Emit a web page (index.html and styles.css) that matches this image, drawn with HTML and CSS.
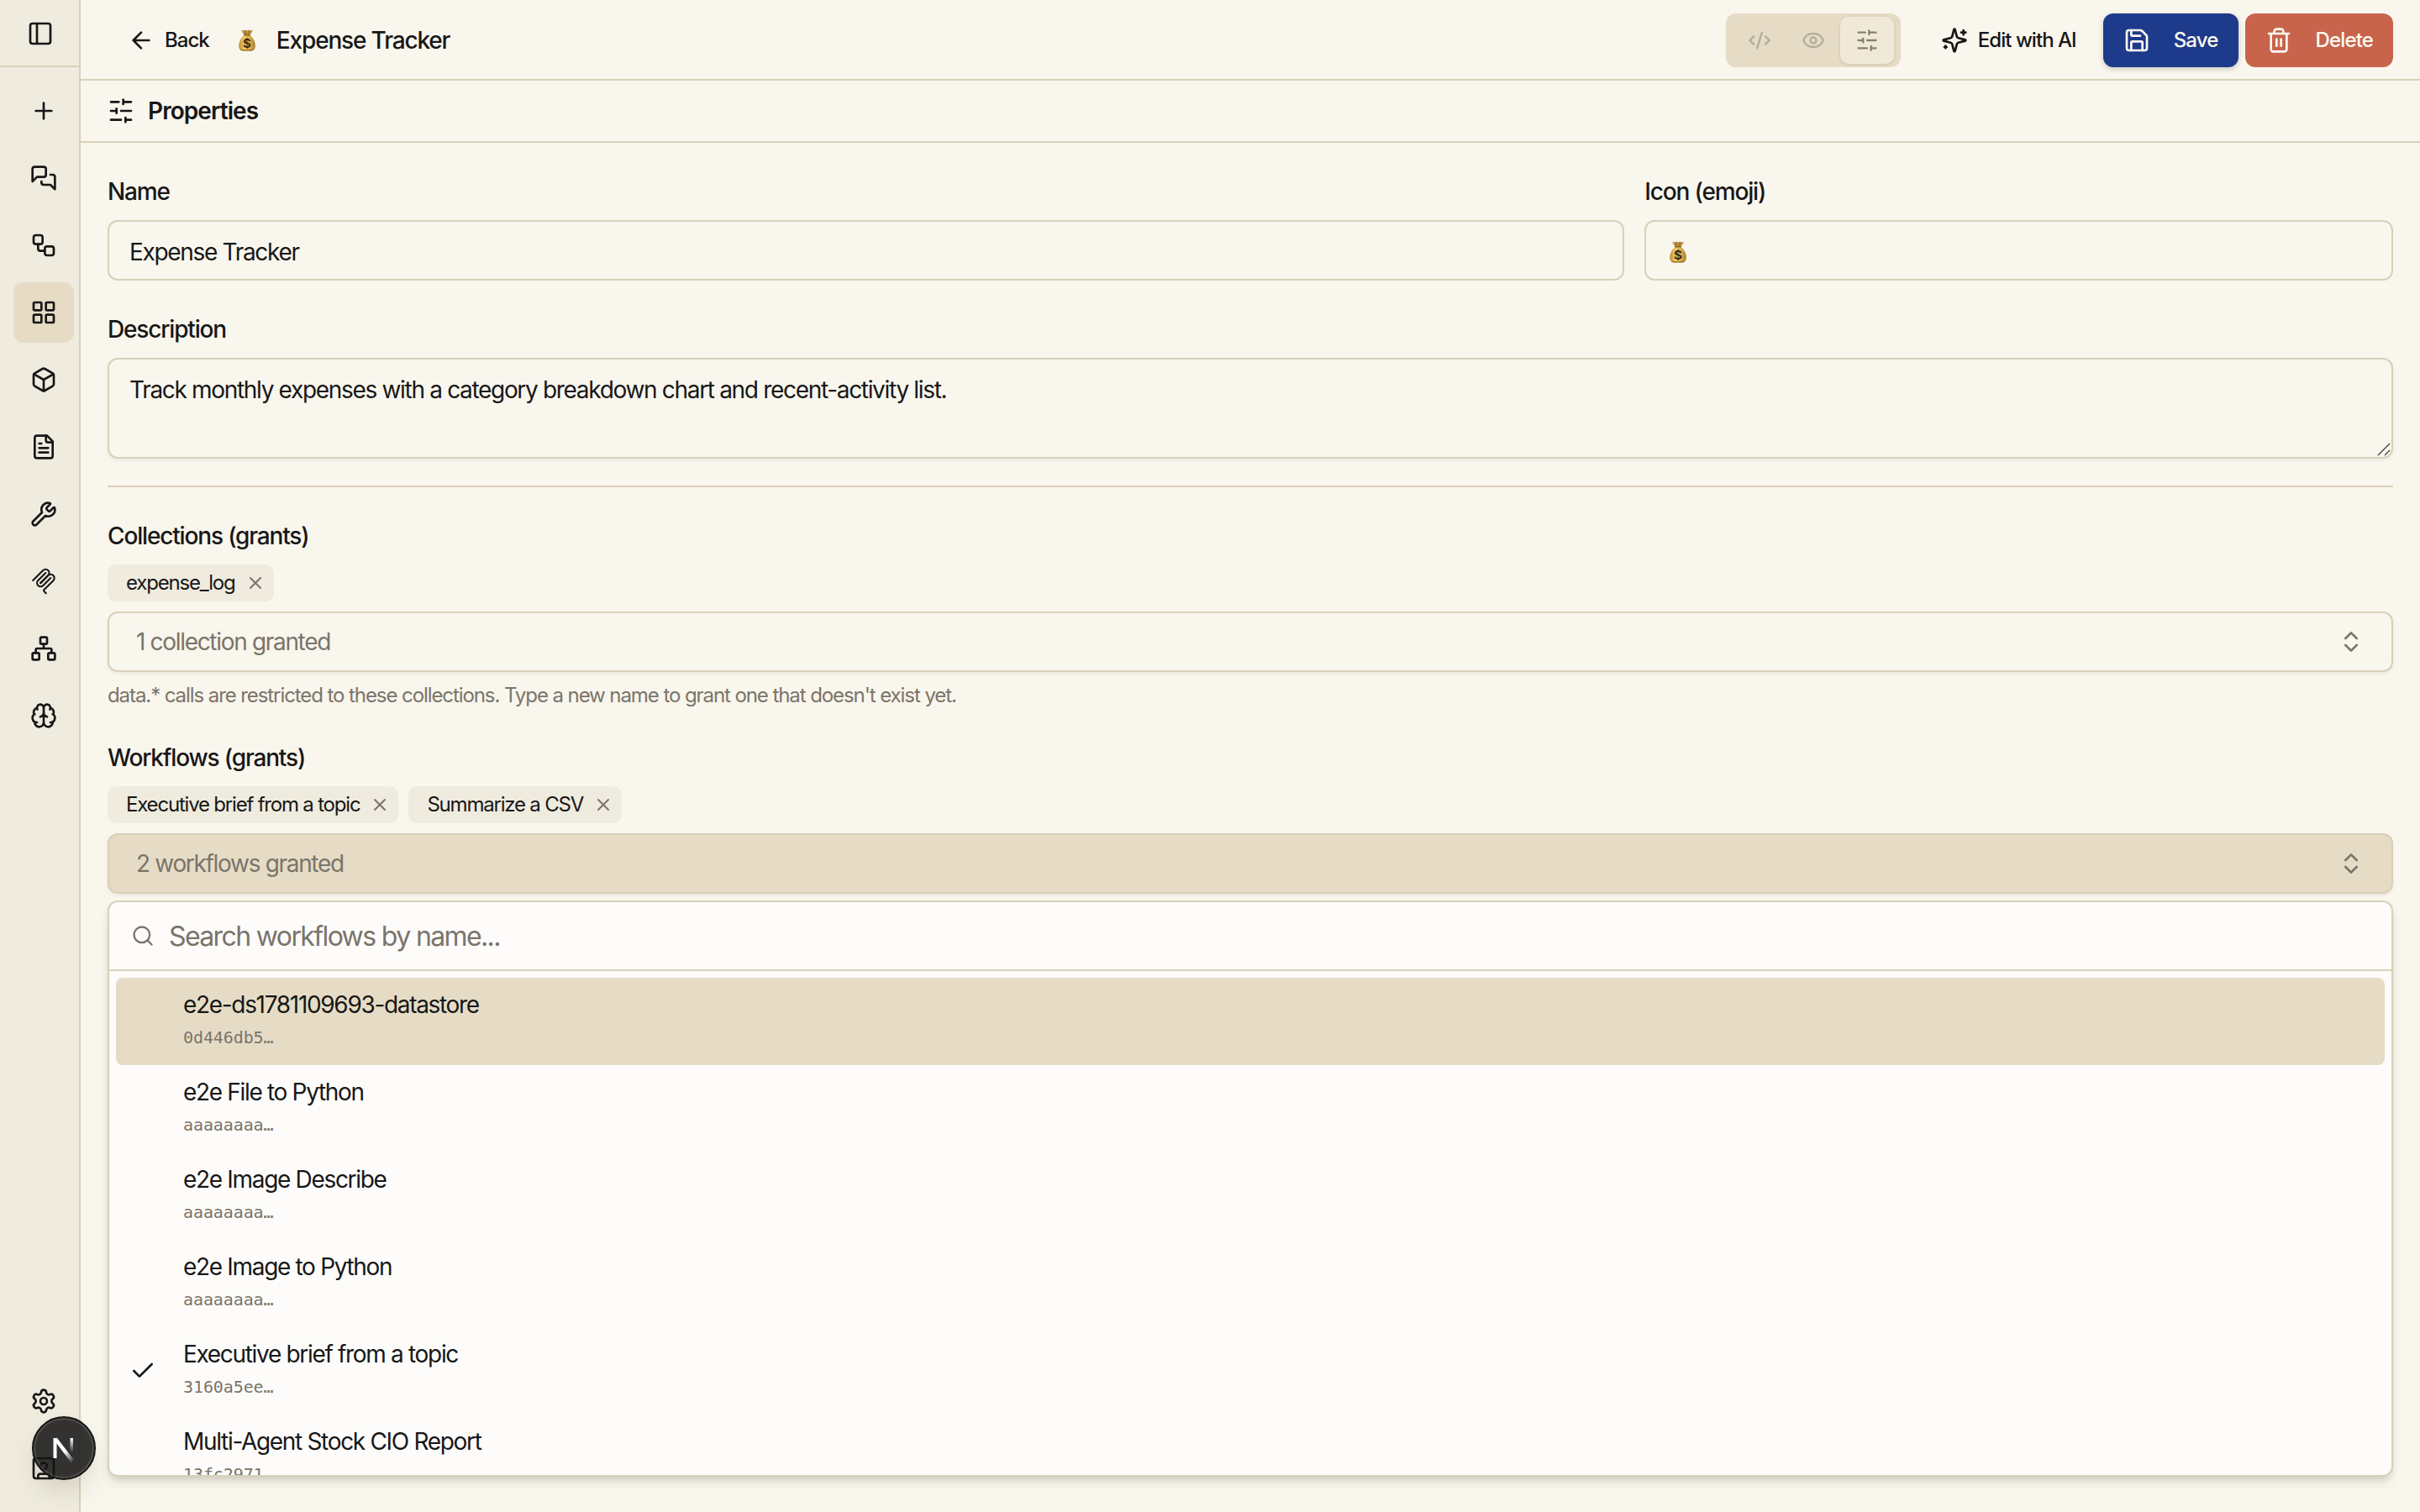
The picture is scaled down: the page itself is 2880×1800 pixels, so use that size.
FILE: index.html
```html
<!DOCTYPE html>
<html lang="en">
<head>
<meta charset="utf-8">
<title>Expense Tracker</title>
<link rel="stylesheet" href="styles.css">
</head>
<body>
<svg class="defs" width="0" height="0">
  <linearGradient id="gold" x1="0" x2="1"><stop stop-color="#c08f35"/><stop offset=".35" stop-color="#efcd6a"/><stop offset=".7" stop-color="#d9ae48"/><stop offset="1" stop-color="#a87a2c"/></linearGradient>
  <symbol id="sliders" viewBox="0 0 24 24"><path d="M21 4h-7M10 4H3M21 12h-9M8 12H3M21 20h-5M12 20H3M14 2v4M8 10v4M16 18v4"/></symbol>
  <symbol id="x" viewBox="0 0 24 24"><path d="M18 6 6 18M6 6l12 12"/></symbol>
  <symbol id="updown" viewBox="0 0 24 24"><path d="m7 15 5 5 5-5M7 9l5-5 5 5"/></symbol>
  <symbol id="moneybag" viewBox="0 0 20 26">
    <path d="M3 .8 6 1.500 7.500.5 10 1.500 12.500.5 14 1.500 17 .8 13.500 7h-7z" fill="#b98c3c"/>
    <path d="M7.500 2 8.500 6M12.500 2l-1 4" stroke="#8a6222" stroke-width=".8"/>
    <path d="M6.500 7h7c3.800 3 6.300 8 6.300 12.500 0 4-1.800 6-5.800 6H6c-4 0-5.800-2-5.800-6C.2 15 2.700 10 6.500 7z" fill="url(#gold)"/>
    <path d="M6 6.200h8v1.400H6z" fill="#8f6724"/>
    <path d="M1.500 23c2 1.600 15 1.600 17 0-1 1.900-2.500 2.500-4.500 2.500H6c-2 0-3.500-.6-4.500-2.500z" fill="#9a6f28"/>
  </symbol>
</svg>
<div class="app">
  <nav class="sidebar">
    <div class="side-head"><svg class="ic" viewBox="0 0 24 24"><rect width="18" height="18" x="3" y="3" rx="2"/><path d="M9 3v18"/></svg></div>
    <div class="side-list">
      <a class="side-item"><svg class="ic" viewBox="0 0 24 24"><path d="M5 12h14M12 5v14"/></svg></a>
      <a class="side-item"><svg class="ic" viewBox="0 0 24 24"><path d="M14 9a2 2 0 0 1-2 2H6l-4 4V4a2 2 0 0 1 2-2h8a2 2 0 0 1 2 2z"/><path d="M18 9h2a2 2 0 0 1 2 2v11l-4-4h-6a2 2 0 0 1-2-2v-1"/></svg></a>
      <a class="side-item"><svg class="ic" viewBox="0 0 24 24"><rect width="8" height="8" x="3" y="3" rx="2"/><path d="M7 11v4a2 2 0 0 0 2 2h4"/><rect width="8" height="8" x="13" y="13" rx="2"/></svg></a>
      <a class="side-item active"><svg class="ic" viewBox="0 0 24 24"><rect width="7" height="7" x="3" y="3" rx="1"/><rect width="7" height="7" x="14" y="3" rx="1"/><rect width="7" height="7" x="14" y="14" rx="1"/><rect width="7" height="7" x="3" y="14" rx="1"/></svg></a>
      <a class="side-item"><svg class="ic" viewBox="0 0 24 24"><path d="M21 8a2 2 0 0 0-1-1.730l-7-4a2 2 0 0 0-2 0l-7 4A2 2 0 0 0 3 8v8a2 2 0 0 0 1 1.730l7 4a2 2 0 0 0 2 0l7-4A2 2 0 0 0 21 16Z"/><path d="m3.300 7 8.700 5 8.700-5M12 22V12"/></svg></a>
      <a class="side-item"><svg class="ic" viewBox="0 0 24 24"><path d="M15 2H6a2 2 0 0 0-2 2v16a2 2 0 0 0 2 2h12a2 2 0 0 0 2-2V7Z"/><path d="M14 2v4a2 2 0 0 0 2 2h4M10 9H8M16 13H8M16 17H8"/></svg></a>
      <a class="side-item"><svg class="ic" viewBox="0 0 24 24"><path d="M14.700 6.300a1 1 0 0 0 0 1.400l1.600 1.600a1 1 0 0 0 1.400 0l3.106-3.105c.32-.322.863-.22.983.218a6 6 0 0 1-8.259 7.057l-7.910 7.910a1 1 0 0 1-2.999-3l7.910-7.910a6 6 0 0 1 7.057-8.259c.438.12.54.662.219.984z"/></svg></a>
      <a class="side-item"><svg class="ic mcp" viewBox="0 0 180 180"><path d="M18 84.853 85.882 16.971c9.373-9.373 24.569-9.373 33.941 0 9.373 9.372 9.373 24.568 0 33.941L68.558 102.177"/><path d="M69.265 101.470 119.823 50.912c9.373-9.373 24.569-9.373 33.942 0l.353.353c9.373 9.373 9.373 24.569 0 33.941L92.725 146.600c-3.124 3.124-3.124 8.189 0 11.313l12.606 12.607"/><path d="M102.853 33.941 52.648 84.146c-9.372 9.372-9.372 24.568 0 33.941 9.373 9.372 24.569 9.372 33.941 0L136.794 67.882"/></svg></a>
      <a class="side-item"><svg class="ic" viewBox="0 0 24 24"><rect x="16" y="16" width="6" height="6" rx="1"/><rect x="2" y="16" width="6" height="6" rx="1"/><rect x="9" y="2" width="6" height="6" rx="1"/><path d="M5 16v-3a1 1 0 0 1 1-1h12a1 1 0 0 1 1 1v3M12 12V8"/></svg></a>
      <a class="side-item"><svg class="ic" viewBox="0 0 24 24"><path d="M12 18V5M15 13a4.170 4.170 0 0 1-3-4 4.170 4.170 0 0 1-3 4M17.598 6.500A3 3 0 1 0 12 5a3 3 0 1 0-5.598 1.500M17.997 5.125a4 4 0 0 1 2.526 5.770M18 18a4 4 0 0 0 2-7.464M19.967 17.483A4 4 0 1 1 12 18a4 4 0 1 1-7.967-.517M6 18a4 4 0 0 1-2-7.464M6.003 5.125a4 4 0 0 0-2.526 5.770"/></svg></a>
    </div>
    <div class="side-foot">
      <a class="side-item"><svg class="ic" viewBox="0 0 24 24"><path d="M9.671 4.136a2.340 2.340 0 0 1 4.659 0 2.340 2.340 0 0 0 3.319 1.915 2.340 2.340 0 0 1 2.330 4.033 2.340 2.340 0 0 0 0 3.831 2.340 2.340 0 0 1-2.330 4.033 2.340 2.340 0 0 0-3.319 1.915 2.340 2.340 0 0 1-4.659 0 2.340 2.340 0 0 0-3.320-1.915 2.340 2.340 0 0 1-2.330-4.033 2.340 2.340 0 0 0 0-3.831A2.340 2.340 0 0 1 6.350 6.051a2.340 2.340 0 0 0 3.319-1.915"/><circle cx="12" cy="12" r="3"/></svg></a>
      <a class="side-item"><svg class="ic" viewBox="0 0 24 24"><rect width="18" height="18" x="3" y="3" rx="2"/><circle cx="12" cy="10" r="3"/><path d="M7 21v-2a2 2 0 0 1 2-2h6a2 2 0 0 1 2 2v2"/></svg></a>
    </div>
  </nav>
  <main class="main">
    <header class="topbar">
      <a class="back"><svg class="ic" viewBox="0 0 24 24"><path d="m12 19-7-7 7-7M19 12H5"/></svg><span>Back</span></a>
      <svg class="bag" viewBox="0 0 20 26"><use href="#moneybag"/><text x="10" y="22" text-anchor="middle" class="bag-sign">$</text></svg>
      <h1 class="title">Expense Tracker</h1>
      <div class="actions">
        <div class="views">
          <span class="view"><svg class="ic s28" viewBox="0 0 24 24"><path d="m18 16 4-4-4-4M6 8l-4 4 4 4M14.500 4l-5 16"/></svg></span>
          <span class="view"><svg class="ic s28" viewBox="0 0 24 24"><path d="M2.062 12.348a1 1 0 0 1 0-.696 10.750 10.750 0 0 1 19.876 0 1 1 0 0 1 0 .696 10.750 10.750 0 0 1-19.876 0"/><circle cx="12" cy="12" r="3"/></svg></span>
          <span class="view on"><svg class="ic s28"><use href="#sliders"/></svg></span>
        </div>
        <a class="edit"><svg class="ic" viewBox="0 0 24 24"><path d="M9.937 15.500A2 2 0 0 0 8.500 14.063l-6.135-1.582a.5.5 0 0 1 0-.962L8.500 9.936A2 2 0 0 0 9.937 8.500l1.582-6.135a.5.5 0 0 1 .963 0L14.063 8.500A2 2 0 0 0 15.500 9.937l6.135 1.581a.5.5 0 0 1 0 .964L15.500 14.063a2 2 0 0 0-1.437 1.437l-1.582 6.135a.5.5 0 0 1-.963 0zM20 3v4M22 5h-4M4 17v2M5 18H3"/></svg><span>Edit with AI</span></a>
        <a class="btn save"><svg class="ic" viewBox="0 0 24 24"><path d="M15.200 3a2 2 0 0 1 1.400.6l3.800 3.800a2 2 0 0 1 .6 1.400V19a2 2 0 0 1-2 2H5a2 2 0 0 1-2-2V5a2 2 0 0 1 2-2z"/><path d="M17 21v-7a1 1 0 0 0-1-1H8a1 1 0 0 0-1 1v7M7 3v4a1 1 0 0 0 1 1h7"/></svg><span>Save</span></a>
        <a class="btn delete"><svg class="ic" viewBox="0 0 24 24"><path d="M3 6h18M19 6v14c0 1-1 2-2 2H7c-1 0-2-1-2-2V6M8 6V4c0-1 1-2 2-2h4c1 0 2 1 2 2v2M10 11v6M14 11v6"/></svg><span>Delete</span></a>
      </div>
    </header>
    <div class="subbar"><svg class="ic"><use href="#sliders"/></svg><h2>Properties</h2></div>
    <form class="form">
      <div class="grid">
        <div class="field wide"><label>Name</label><div class="input line">Expense Tracker</div></div>
        <div class="field"><label>Icon (emoji)</label><div class="input line"><svg class="bag small" viewBox="0 0 20 26"><use href="#moneybag"/><text x="10" y="22" text-anchor="middle" class="bag-sign">$</text></svg></div></div>
      </div>
      <div class="field desc"><label>Description</label><div class="input area">Track monthly expenses with a category breakdown chart and recent-activity list.<svg class="grip" viewBox="0 0 16 16"><path d="M1 15 15 1M9 15l6-6"/></svg></div></div>
      <hr>
      <div class="grant">
        <label>Collections (grants)</label>
        <div class="chips"><span class="chip">expense_log<svg class="ic s24"><use href="#x"/></svg></span></div>
        <div class="select">1 collection granted<svg class="ic"><use href="#updown"/></svg></div>
        <p class="help">data.* calls are restricted to these collections. Type a new name to grant one that doesn't exist yet.</p>
      </div>
      <div class="grant second">
        <label>Workflows (grants)</label>
        <div class="chips"><span class="chip">Executive brief from a topic<svg class="ic s24"><use href="#x"/></svg></span><span class="chip">Summarize a CSV<svg class="ic s24"><use href="#x"/></svg></span></div>
        <div class="select open">2 workflows granted<svg class="ic"><use href="#updown"/></svg></div>
      </div>
      <div class="popup">
        <div class="search"><svg class="ic s28" viewBox="0 0 24 24"><path d="m21 21-4.340-4.340"/><circle cx="11" cy="11" r="8"/></svg><span>Search workflows by name...</span></div>
        <div class="options">
          <div class="option hl"><span class="mark"></span><div><b>e2e-ds1781109693-datastore</b><code>0d446db5…</code></div></div>
          <div class="option"><span class="mark"></span><div><b>e2e File to Python</b><code>aaaaaaaa…</code></div></div>
          <div class="option"><span class="mark"></span><div><b>e2e Image Describe</b><code>aaaaaaaa…</code></div></div>
          <div class="option"><span class="mark"></span><div><b>e2e Image to Python</b><code>aaaaaaaa…</code></div></div>
          <div class="option"><span class="mark"><svg class="ic" viewBox="0 0 24 24"><path d="M20 6 9 17l-5-5"/></svg></span><div><b>Executive brief from a topic</b><code>3160a5ee…</code></div></div>
          <div class="option"><span class="mark"></span><div><b>Multi-Agent Stock CIO Report</b><code>13fc2971…</code></div></div>
        </div>
      </div>
    </form>
  </main>
  <div class="dev-badge">
    <svg viewBox="0 0 40 40"><defs>
      <linearGradient id="ga" x1="21" y1="24" x2="31" y2="37" gradientUnits="userSpaceOnUse"><stop stop-color="#fff"/><stop offset="1" stop-color="#fff" stop-opacity="0"/></linearGradient>
      <linearGradient id="gb" x1="30" y1="8" x2="30" y2="25" gradientUnits="userSpaceOnUse"><stop stop-color="#fff"/><stop offset="1" stop-color="#fff" stop-opacity="0"/></linearGradient></defs>
      <path d="M7.500 32V8h4.500L32 34l-3.500 3L11.500 14.500V32z" fill="url(#ga)"/><path d="M27.500 8h3.500v16.500h-3.500z" fill="url(#gb)"/></svg>
  </div>
</div>
</body>
</html>
```
FILE: styles.css
```css
* { box-sizing: border-box; }
body {
  margin: 0;
  background: #f9f6ed;
  color: #171717;
  font: 400 28px/40px Inter, "Liberation Sans", sans-serif;
  letter-spacing: -1.32px;
}
h1, h2, p { margin: 0; }
.defs { position: absolute; }
.app { display: flex; height: 1800px; overflow: hidden; }
.ic {
  width: 32px; height: 32px; flex: none;
  fill: none; stroke: currentColor; stroke-width: 2;
  stroke-linecap: round; stroke-linejoin: round;
}
.s28 { width: 28px; height: 28px; }
.s24 { width: 24px; height: 24px; }
.mcp { stroke-width: 12; }

.sidebar {
  display: flex; flex-direction: column; width: 96px; flex: none;
  background: #efebdf; border-right: 2px solid #d8d0b8;
}
.side-head {
  height: 80px; border-bottom: 2px solid #d8d0b8; padding: 2px 0 0 2px;
  display: flex; align-items: center; justify-content: center;
}
.side-list, .side-foot { display: flex; flex-direction: column; gap: 8px; padding: 16px 0 0 16px; }
.side-foot { margin-top: auto; padding: 0 0 16px 16px; }
.side-item {
  width: 72px; height: 72px; border-radius: 12px;
  display: flex; align-items: center; justify-content: center;
}
.side-item.active { background: #e6dcc6; }

.main { flex: 1; display: flex; flex-direction: column; min-width: 0; }
.topbar {
  height: 96px; border-bottom: 2px solid #d8d0b8;
  display: flex; align-items: center; padding: 2px 32px 0 56px;
}
.back, .edit { display: flex; align-items: center; gap: 12px; font-size: 24px; font-weight: 500; letter-spacing: -0.96px; }
.bag { width: 20px; height: 26px; margin-left: 35px; flex: none; }
.bag-sign { font: 700 15px/1 Inter, sans-serif; fill: #3b2b12; letter-spacing: 0; }
.title { font-size: 28px; font-weight: 500; margin-left: 25px; letter-spacing: -1.16px; }
.actions { margin-left: auto; display: flex; align-items: center; }
.views {
  display: flex; height: 64px; padding: 4px 8px; border-radius: 12px;
  background: #e6dcc6; color: #b5ac9b;
}
.view { width: 64px; display: flex; align-items: center; justify-content: center; border-radius: 10px; }
.view.on { background: #f0e9da; color: #87806f; box-shadow: 0 1px 4px rgba(120, 100, 60, .2); }
.edit { margin: 0 32px 0 48px; }
.btn {
  display: flex; align-items: center; gap: 28px; height: 64px; padding: 0 24px;
  border-radius: 12px; color: #fdfaf3; font-size: 24px; font-weight: 500; letter-spacing: -0.85px;
}
.save { background: #1e3a8a; box-shadow: 0 2px 6px rgba(0, 0, 0, .2); }
.delete { background: #c8644c; margin-left: 8px; }

.subbar {
  height: 74px; border-bottom: 2px solid #d8d0b8; padding-left: 32px;
  display: flex; align-items: center; gap: 16px;
}
.subbar h2 { font-size: 28px; font-weight: 600; letter-spacing: -0.93px; }

.form { padding: 38px 32px 0; }
label { display: block; font-weight: 500; height: 40px; letter-spacing: -1.16px; }
.grid { display: grid; grid-template-columns: repeat(3, 1fr); gap: 24px; }
.wide { grid-column: span 2; }
.input, .select {
  height: 72px; border: 2px solid #d8d0b8; border-radius: 12px;
  display: flex; align-items: center; padding: 0 24px;
}
.line { padding-top: 3px; }
.field .input { margin-top: 14px; }
.small { margin-left: 4px; }
.desc { margin-top: 38px; }
.field .area {
  height: 120px; align-items: flex-start; padding-top: 16px; position: relative;
  box-shadow: 0 2px 4px rgba(0, 0, 0, .05);
}
.grip {
  position: absolute; right: 1px; bottom: 1px; width: 16px; height: 16px;
  fill: none; stroke: #444; stroke-width: 1.4;
}
hr { border: 0; height: 2px; background: #d8d0b8; margin: 32px 0 38px; }
.chips { display: flex; gap: 12px; margin: 14px 0 12px; }
.chip {
  display: flex; align-items: center; gap: 12px; height: 44px; padding: 0 10px 0 22px;
  border-radius: 10px; background: #efebdf; font-size: 24px; letter-spacing: -1.2px;
}
.chip .ic, .select, .help, .search, code { color: #7a746a; }
.select { padding: 0 32px; justify-content: space-between; box-shadow: 0 2px 4px rgba(0, 0, 0, .06); }
.open { background: #e6dcc6; }
.help { font-size: 24px; line-height: 32px; margin-top: 12px; letter-spacing: -1.08px; }
.second { margin-top: 38px; }
.popup {
  height: 686px; margin-top: 8px; background: #fdfcfa; overflow: hidden;
  border: 2px solid #d8d0b8; border-radius: 12px;
  box-shadow: 0 8px 12px -2px rgba(60, 50, 20, .14), 0 4px 8px -4px rgba(60, 50, 20, .14);
}
.search {
  height: 82px; border-bottom: 2px solid #d8d0b8; padding-left: 26px;
  display: flex; align-items: center; gap: 17px; font-size: 32px; letter-spacing: -1.62px;
}
.search span { padding-top: 2px; }
.options { padding: 8px; }
.option { height: 104px; border-radius: 8px; padding: 12px 16px; display: flex; align-items: center; gap: 32px; }
.hl { background: #e6dcc6; }
.mark { width: 32px; height: 32px; }
.option b { display: block; font-weight: 400; }
code { display: block; height: 40px; font: 400 20px/38px "DejaVu Sans Mono", monospace; letter-spacing: -0.1px; }

.dev-badge {
  position: absolute; left: 38px; top: 1686px; width: 76px; height: 76px; border-radius: 50%;
  background: rgba(20, 20, 20, .86); border: 2px solid #171717;
  box-shadow: inset 0 0 0 2px rgba(255, 255, 255, .14), 0 16px 32px -8px rgba(60, 50, 20, .2);
  display: flex; align-items: center; justify-content: center;
}
.dev-badge svg { width: 40px; height: 40px; }
```
